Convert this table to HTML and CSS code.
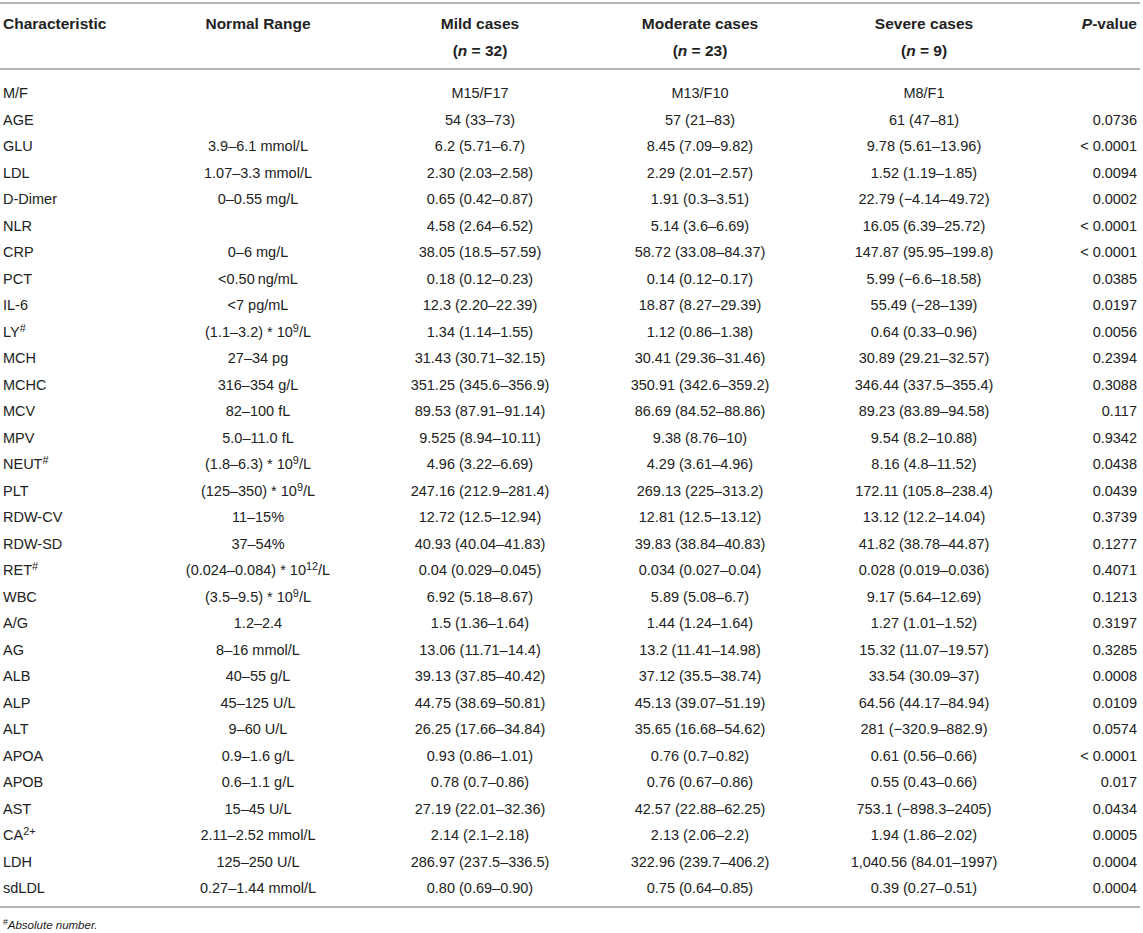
FILE: index.html
```html
<!DOCTYPE html>
<html lang="en">
<head>
    <meta charset="UTF-8">
    <title>Laboratory characteristics by severity</title>
    <link rel="stylesheet" href="styles.css">
</head>
<body>
    <div class="table-wrap">
        <table class="data-table">
            <colgroup>
                <col class="col-name">
                <col class="col-range">
                <col class="col-mild">
                <col class="col-moderate">
                <col class="col-severe">
                <col class="col-p">
            </colgroup>
            <thead>
                <tr>
                    <th class="left">Characteristic</th>
                    <th>Normal Range</th>
                    <th>Mild cases<br>(<i>n</i> = 32)</th>
                    <th>Moderate cases<br>(<i>n</i> = 23)</th>
                    <th>Severe cases<br>(<i>n</i> = 9)</th>
                    <th class="right"><i>P</i>-value</th>
                </tr>
            </thead>
            <tbody>
                <tr><td>M/F</td><td></td><td>M15/F17</td><td>M13/F10</td><td>M8/F1</td><td></td></tr>
                <tr><td>AGE</td><td></td><td>54 (33–73)</td><td>57 (21–83)</td><td>61 (47–81)</td><td>0.0736</td></tr>
                <tr><td>GLU</td><td>3.9–6.1 mmol/L</td><td>6.2 (5.71–6.7)</td><td>8.45 (7.09–9.82)</td><td>9.78 (5.61–13.96)</td><td>&lt; 0.0001</td></tr>
                <tr><td>LDL</td><td>1.07–3.3 mmol/L</td><td>2.30 (2.03–2.58)</td><td>2.29 (2.01–2.57)</td><td>1.52 (1.19–1.85)</td><td>0.0094</td></tr>
                <tr><td>D-Dimer</td><td>0–0.55 mg/L</td><td>0.65 (0.42–0.87)</td><td>1.91 (0.3–3.51)</td><td>22.79 (−4.14–49.72)</td><td>0.0002</td></tr>
                <tr><td>NLR</td><td></td><td>4.58 (2.64–6.52)</td><td>5.14 (3.6–6.69)</td><td>16.05 (6.39–25.72)</td><td>&lt; 0.0001</td></tr>
                <tr><td>CRP</td><td>0–6 mg/L</td><td>38.05 (18.5–57.59)</td><td>58.72 (33.08–84.37)</td><td>147.87 (95.95–199.8)</td><td>&lt; 0.0001</td></tr>
                <tr><td>PCT</td><td>&lt;0.50&#8201;ng/mL</td><td>0.18 (0.12–0.23)</td><td>0.14 (0.12–0.17)</td><td>5.99 (−6.6–18.58)</td><td>0.0385</td></tr>
                <tr><td>IL-6</td><td>&lt;7 pg/mL</td><td>12.3 (2.20–22.39)</td><td>18.87 (8.27–29.39)</td><td>55.49 (−28–139)</td><td>0.0197</td></tr>
                <tr><td>LY<sup>#</sup></td><td>(1.1–3.2) * 10<sup>9</sup>/L</td><td>1.34 (1.14–1.55)</td><td>1.12 (0.86–1.38)</td><td>0.64 (0.33–0.96)</td><td>0.0056</td></tr>
                <tr><td>MCH</td><td>27–34 pg</td><td>31.43 (30.71–32.15)</td><td>30.41 (29.36–31.46)</td><td>30.89 (29.21–32.57)</td><td>0.2394</td></tr>
                <tr><td>MCHC</td><td>316–354 g/L</td><td>351.25 (345.6–356.9)</td><td>350.91 (342.6–359.2)</td><td>346.44 (337.5–355.4)</td><td>0.3088</td></tr>
                <tr><td>MCV</td><td>82–100 fL</td><td>89.53 (87.91–91.14)</td><td>86.69 (84.52–88.86)</td><td>89.23 (83.89–94.58)</td><td>0.117</td></tr>
                <tr><td>MPV</td><td>5.0–11.0 fL</td><td>9.525 (8.94–10.11)</td><td>9.38 (8.76–10)</td><td>9.54 (8.2–10.88)</td><td>0.9342</td></tr>
                <tr><td>NEUT<sup>#</sup></td><td>(1.8–6.3) * 10<sup>9</sup>/L</td><td>4.96 (3.22–6.69)</td><td>4.29 (3.61–4.96)</td><td>8.16 (4.8–11.52)</td><td>0.0438</td></tr>
                <tr><td>PLT</td><td>(125–350) * 10<sup>9</sup>/L</td><td>247.16 (212.9–281.4)</td><td>269.13 (225–313.2)</td><td>172.11 (105.8–238.4)</td><td>0.0439</td></tr>
                <tr><td>RDW-CV</td><td>11–15%</td><td>12.72 (12.5–12.94)</td><td>12.81 (12.5–13.12)</td><td>13.12 (12.2–14.04)</td><td>0.3739</td></tr>
                <tr><td>RDW-SD</td><td>37–54%</td><td>40.93 (40.04–41.83)</td><td>39.83 (38.84–40.83)</td><td>41.82 (38.78–44.87)</td><td>0.1277</td></tr>
                <tr><td>RET<sup>#</sup></td><td>(0.024–0.084) * 10<sup>12</sup>/L</td><td>0.04 (0.029–0.045)</td><td>0.034 (0.027–0.04)</td><td>0.028 (0.019–0.036)</td><td>0.4071</td></tr>
                <tr><td>WBC</td><td>(3.5–9.5) * 10<sup>9</sup>/L</td><td>6.92 (5.18–8.67)</td><td>5.89 (5.08–6.7)</td><td>9.17 (5.64–12.69)</td><td>0.1213</td></tr>
                <tr><td>A/G</td><td>1.2–2.4</td><td>1.5 (1.36–1.64)</td><td>1.44 (1.24–1.64)</td><td>1.27 (1.01–1.52)</td><td>0.3197</td></tr>
                <tr><td>AG</td><td>8–16 mmol/L</td><td>13.06 (11.71–14.4)</td><td>13.2 (11.41–14.98)</td><td>15.32 (11.07–19.57)</td><td>0.3285</td></tr>
                <tr><td>ALB</td><td>40–55 g/L</td><td>39.13 (37.85–40.42)</td><td>37.12 (35.5–38.74)</td><td>33.54 (30.09–37)</td><td>0.0008</td></tr>
                <tr><td>ALP</td><td>45–125 U/L</td><td>44.75 (38.69–50.81)</td><td>45.13 (39.07–51.19)</td><td>64.56 (44.17–84.94)</td><td>0.0109</td></tr>
                <tr><td>ALT</td><td>9–60 U/L</td><td>26.25 (17.66–34.84)</td><td>35.65 (16.68–54.62)</td><td>281 (−320.9–882.9)</td><td>0.0574</td></tr>
                <tr><td>APOA</td><td>0.9–1.6 g/L</td><td>0.93 (0.86–1.01)</td><td>0.76 (0.7–0.82)</td><td>0.61 (0.56–0.66)</td><td>&lt; 0.0001</td></tr>
                <tr><td>APOB</td><td>0.6–1.1 g/L</td><td>0.78 (0.7–0.86)</td><td>0.76 (0.67–0.86)</td><td>0.55 (0.43–0.66)</td><td>0.017</td></tr>
                <tr><td>AST</td><td>15–45 U/L</td><td>27.19 (22.01–32.36)</td><td>42.57 (22.88–62.25)</td><td>753.1 (−898.3–2405)</td><td>0.0434</td></tr>
                <tr><td>CA<sup>2+</sup></td><td>2.11–2.52 mmol/L</td><td>2.14 (2.1–2.18)</td><td>2.13 (2.06–2.2)</td><td>1.94 (1.86–2.02)</td><td>0.0005</td></tr>
                <tr><td>LDH</td><td>125–250 U/L</td><td>286.97 (237.5–336.5)</td><td>322.96 (239.7–406.2)</td><td>1,040.56 (84.01–1997)</td><td>0.0004</td></tr>
                <tr><td>sdLDL</td><td>0.27–1.44 mmol/L</td><td>0.80 (0.69–0.90)</td><td>0.75 (0.64–0.85)</td><td>0.39 (0.27–0.51)</td><td>0.0004</td></tr>
            </tbody>
        </table>
        <p class="footnote"><sup>#</sup><i>Absolute number.</i></p>
    </div>
</body>
</html>
```

FILE: styles.css
```css
body {
    margin: 0;
    background: #ffffff;
    color: #222;
    font-family: 'Liberation Sans', Arial, sans-serif;
}
.table-wrap {
    width: 1140px;
    padding-top: 2px;
}
.data-table {
    width: 1140px;
    border-collapse: collapse;
    table-layout: fixed;
    font-size: 14.5px;
    border-top: 2px solid #b5b5b5;
    border-bottom: 2px solid #b5b5b5;
}
.col-name { width: 150px; }
.col-range { width: 216px; }
.col-mild { width: 228px; }
.col-moderate { width: 212px; }
.col-severe { width: 236px; }
.col-p { width: 98px; }

thead tr {
    border-bottom: 2px solid #b5b5b5;
}
th {
    font-size: 15.5px;
    font-weight: bold;
    text-align: center;
    vertical-align: top;
    line-height: 27px;
    padding: 6px 3px 4px 3px;
    white-space: nowrap;
}
th.left {
    text-align: left;
}
th.right {
    text-align: right;
}
td {
    text-align: center;
    line-height: 18.5px;
    padding: 4px 3px;
    white-space: nowrap;
}
td:first-child {
    text-align: left;
}
td:last-child {
    text-align: right;
}
tbody tr:first-child td {
    padding-top: 14px;
}
tbody tr:last-child td {
    padding-bottom: 8px;
}
sup {
    font-size: 0.75em;
    line-height: 0;
    vertical-align: 0.45em;
}
.footnote {
    margin: 0;
    padding: 10px 3px 0 3px;
    font-size: 11.5px;
    line-height: 14px;
}
```
